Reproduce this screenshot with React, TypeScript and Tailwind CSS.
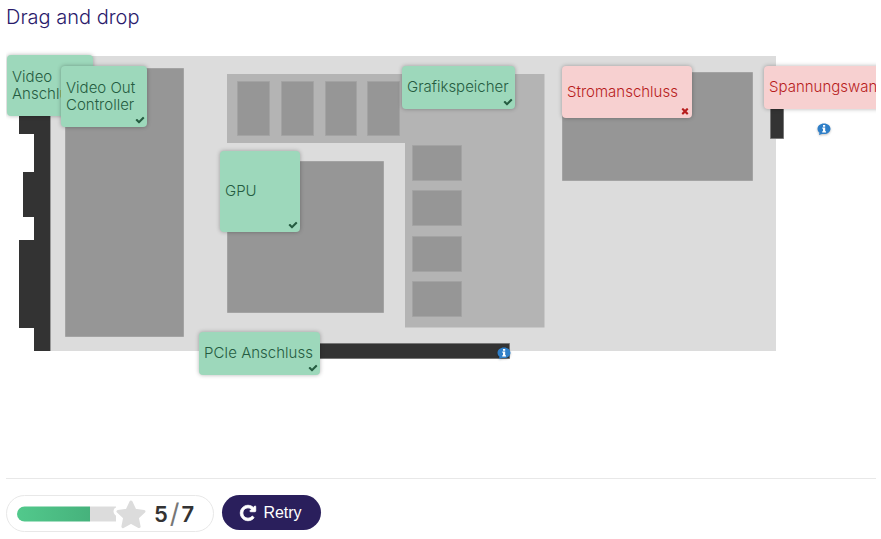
import React from "react";

type Status = "correct" | "wrong";

const CHECK =
  "M1671 566q0 40-28 68l-724 724-136 136q-28 28-68 28t-68-28l-136-136-362-362q-28-28-28-68t28-68l136-136q28-28 68-28t68 28l294 295 656-657q28-28 68-28t68 28l136 136q28 28 28 68z";
const TIMES =
  "M1490 1322q0 40-28 68l-136 136q-28 28-68 28t-68-28l-294-294-294 294q-28 28-68 28t-68-28l-136-136q-28-28-28-68t28-68l294-294-294-294q-28-28-28-68t28-68l136-136q28-28 68-28t68 28l294 294 294-294q28-28 68-28t68 28l136 136q28 28 28 68t-28 68l-294 294 294 294q28 28 28 68z";
const REPEAT =
  "M1664 256v448q0 26-19 45t-45 19h-448q-42 0-59-40-17-39 14-69l138-138q-148-137-349-137-104 0-198.5 40.5t-163.5 109.5-109.5 163.5-40.5 198.5 40.5 198.5 109.5 163.5 163.5 109.5 198.5 40.5q119 0 225-52t179-147q7-10 23-12 15 0 25 9l137 138q9 8 9.5 20.5t-7.5 22.5q-109 132-264 204.5t-327 72.5q-156 0-298-61t-245-164-164-245-61-298 61-298 164-245 245-164 298-61q147 0 284.5 55.5t244.5 156.5l130-129q29-31 70-14 39 17 39 59z";
const STAR =
  "M114 3l4 8.300 9 1.100-6.700 6.200 1.800 9-8.100-4.400-8.100 4.400 1.800-9-6.700-6.200 9-1.100z";

function Glyph({ d, className }: { d: string; className: string }) {
  return (
    <svg viewBox="0 0 1792 1792" fill="currentColor" aria-hidden="true" className={className}>
      <path d={d} />
    </svg>
  );
}

// Answers dropped on the board; `place` is where each one was released.
const answers: { label: string; status: Status; place: string }[] = [
  { label: "Video Anschluss", status: "correct", place: "left-[1px] top-[9px] w-[86px] h-[61px]" },
  { label: "Video Out Controller", status: "correct", place: "left-[55px] top-[20px] w-[86px] h-[61px]" },
  { label: "Grafikspeicher", status: "correct", place: "left-[396px] top-[20px] w-[113px] h-[43px]" },
  { label: "Stromanschluss", status: "wrong", place: "left-[556px] top-[20px] w-[130px] h-[52px]" },
  { label: "Spannungswandler", status: "wrong", place: "left-[758px] top-[20px] w-[150px] h-[43px]" },
  { label: "GPU", status: "correct", place: "left-[214px] top-[105px] w-[80px] h-[81px]" },
  { label: "PCIe Anschluss", status: "correct", place: "left-[193px] top-[286px] w-[121px] h-[43px]" },
];

function Answer({ label, status, place }: (typeof answers)[number]) {
  const tone = status === "correct" ? "bg-[#9dd8bb] text-[#255c41]" : "bg-[#f7d0d0] text-[#b71c1c]";
  return (
    <li
      className={`absolute flex items-center rounded-[4px] px-[5px] pb-0.5 text-[15px] font-light leading-[17px] shadow-[0_0_4px_rgba(0,0,0,0.3)] ${tone} ${place}`}
    >
      {label}
      <Glyph
        d={status === "correct" ? CHECK : TIMES}
        className="absolute bottom-[2px] right-[2px] size-[10px]"
      />
    </li>
  );
}

function Tip({ place }: { place: string }) {
  return (
    <button type="button" aria-label="Show tip" className={`absolute h-[13px] w-[14px] ${place}`}>
      <svg viewBox="0 0 14 13" className="block h-full w-full drop-shadow-[0_1px_1px_rgba(0,0,0,0.25)]">
        <path d="M7 0.5C3.2 0.5.5 2.8.5 5.8c0 1.6.8 3 2 4L2 12l3-1.1c.6.2 1.300.2 2 .2 3.800 0 6.500-2.300 6.500-5.300S10.800.5 7 .5z" fill="#2f7fc8" />
        <path d="M6 2h2.200v1.700H6zM5.300 4.500h2.900v3.700H9v1.300H5.200V8.200H6V5.700h-.7z" fill="#fff" />
      </svg>
    </button>
  );
}

function GraphicsCard() {
  return (
    <svg viewBox="0 0 870 432" width="870" height="432" role="img" aria-label="Grafikkarte" className="block max-w-none">
      <path fill="#dcdcdc" d="M45 10h725v295H45z" />
      <path fill="#333" d="M13 30h31.500v275H28v-23H13v-88h15v-23H17v-45h11V88H13z" />
      <path fill="#b4b4b4" d="M221 28h317.500v253.500H399V97H221z" />
      <g fill="#969696" stroke="#a3a3a3" strokeWidth="1">
        <path d="M59.500 22.500h118v268h-118z" />
        <path d="M231.500 35.500h32v54h-32zM275.500 35.500h32v54h-32zM319.500 35.500h31v54h-31zM361.500 35.500h32v54h-32z" />
        <path d="M406.500 99.500h49v35h-49zM406.500 144.500h49v35h-49zM406.500 190.500h49v35h-49zM406.500 235.500h49v35h-49z" />
        <path d="M221.500 115.500h156v151h-156z" />
        <path d="M556.500 26.500h190v108h-190z" />
      </g>
      <g fill="#333" stroke="#777" strokeWidth="1">
        <path d="M250.500 297.500h253v15h-253z" />
        <path d="M764.500 40.500h13v52h-13z" />
      </g>
    </svg>
  );
}

export default function App() {
  return (
    <main className="ml-1.5 mr-[5px] font-['Inter','Noto_Sans',sans-serif]">
      <h1 className="pb-4 pt-1 text-xl font-light leading-[26px] text-[#2a1a6b]">Drag and drop</h1>

      <section aria-label="Board" className="relative overflow-hidden">
        <GraphicsCard />
        <ul>
          {answers.map((a) => (
            <Answer key={a.label} {...a} />
          ))}
        </ul>
        <Tip place="left-[491px] top-[301px]" />
        <Tip place="left-[811px] top-[77px]" />
      </section>

      <footer className="flex items-start gap-2 border-t border-[#e8e8e8] pt-4">
        <div
          role="group"
          aria-label="Score"
          className="flex h-[37px] w-[208px] items-center rounded-full border border-[#e8e8e8] pl-[10px]"
        >
          <svg viewBox="0 0 130 30" className="h-[30px] w-[130px]" aria-hidden="true">
            <defs>
              <linearGradient id="fill" x1="0" x2="1">
                <stop offset="0" stopColor="#52c98c" />
                <stop offset="1" stopColor="#46b27c" />
              </linearGradient>
            </defs>
            <path d="M73 7.500h26v15H73z" fill="#dcdcdc" />
            <path d="M7.500 7.500H73v15H7.500a7.500 7.500 0 0 1 0-15z" fill="url(#fill)" />
            <g strokeLinejoin="round">
              <path d={STAR} fill="#fff" stroke="#fff" strokeWidth="9" />
              <path d={STAR} fill="#dcdcdc" stroke="#dcdcdc" strokeWidth="3" />
            </g>
          </svg>
          <p className="flex items-center pl-[7px] text-[22px] font-semibold leading-[30px] text-[#333]">
            5<span className="px-0.5 text-[27px] font-normal text-[#777]">/</span>7
          </p>
        </div>
        <button
          type="button"
          className="flex h-[35px] w-[99px] items-center justify-center gap-1.5 rounded-full bg-[#2a1f5c] pr-0.5 font-['Liberation_Sans',Arial,sans-serif] text-base text-white"
        >
          <Glyph d={REPEAT} className="size-[18px] stroke-current stroke-[90]" />
          Retry
        </button>
      </footer>
    </main>
  );
}
